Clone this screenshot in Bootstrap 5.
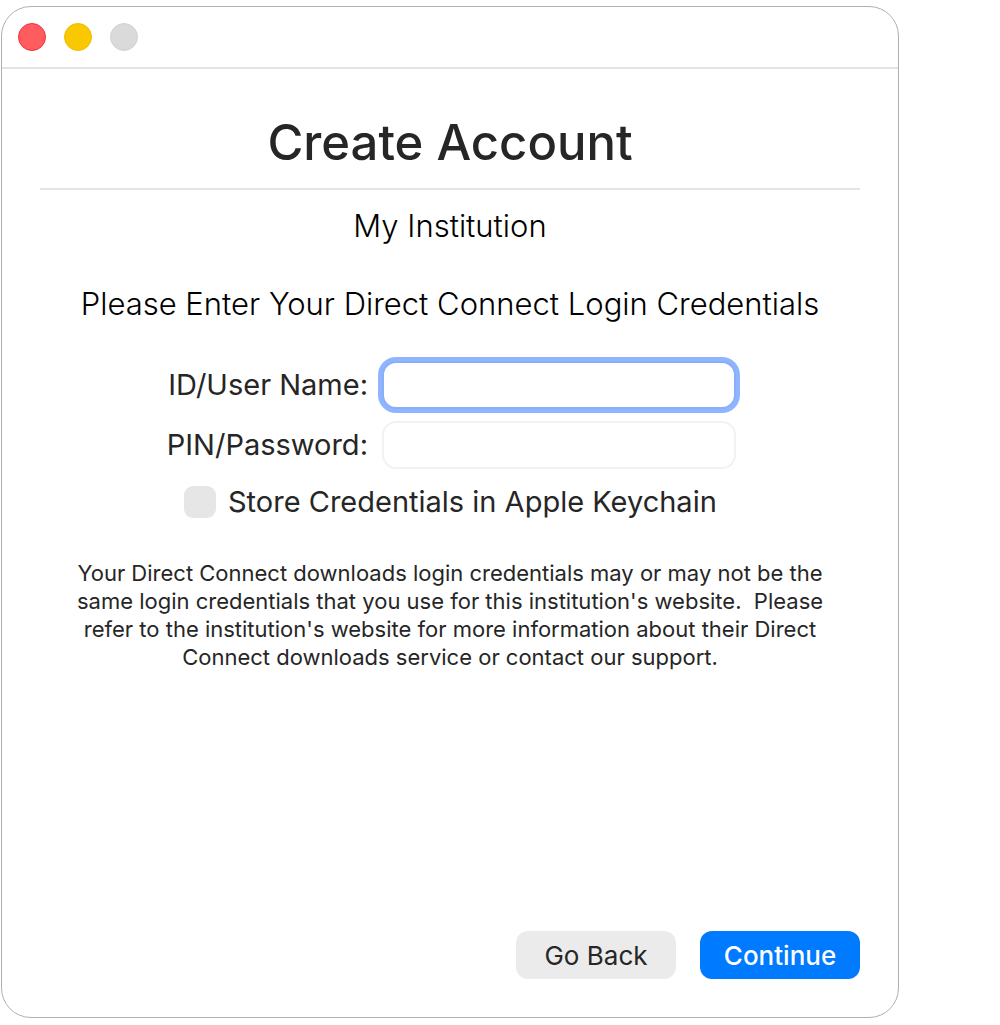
<!DOCTYPE html>
<html lang="en">
<head>
<meta charset="utf-8">
<meta name="viewport" content="width=device-width, initial-scale=1">
<title>Create Account</title>
<link href="https://cdn.jsdelivr.net/npm/bootstrap@5.3.0/dist/css/bootstrap.min.css" rel="stylesheet">
<style>
body { font-family: Inter, "Liberation Sans", sans-serif; background: #fff; color: #262626; }
.stage { width: 90%; min-height: 100vh; padding: 6px 1px 7px; }
.app-window { border: 1px solid #b0b0b0; border-radius: 30px; }
.title-bar { height: 62px; border-bottom: 2px solid #e4e4e4; padding: 0 16px; gap: 18px; }
.light { width: 28px; height: 28px; border-radius: 50%; border: 1px solid #d2d2d2; background: #dadada; padding: 0; }
.light-close { background: #ff5c60; border-color: #f5303a; }
.light-min { background: #fac800; border-color: #f0bc00; }
.window-body { padding: 40px 38px 38px; }
.heading { font-size: 49px; line-height: 68px; font-weight: 500; padding-bottom: 11px; border-bottom: 2px solid #e4e4e4; margin-bottom: 16px; }
.sub-text { font-size: 31px; line-height: 40px; font-weight: 300; color: #000; }
.prompt { margin: 38px 0 37px; }
.credentials { width: 572px; max-width: 100%; gap: 12px; font-size: 29px; line-height: 46px; }
.field-row { gap: 14px; }
.field-label { width: 204px; }
.field { height: 48px; border: 2px solid #f2f2f2; border-radius: 14px; font-size: 28px; padding: 0 12px; }
.field-active, .field:focus { border-color: #8aaffa; box-shadow: 0 0 0 4px #90b5ff; }
.keychain { gap: 12px; padding-left: 20px; line-height: 42px; }
.keychain .form-check-input { width: 32px; height: 32px; border: 0; border-radius: 9px; background-color: #e6e6e6; }
.keychain .form-check-input:checked { background-color: #007aff; }
.note { font-size: 22px; line-height: 28px; margin: 36px auto 0; max-width: 772px; }
.action { width: 160px; height: 48px; border: 0; border-radius: 12px; font-size: 26px; line-height: 46px; padding: 2px 0 0; color: #262626; background: #ebebeb; }
.action-main { background: #007aff; color: #fff; font-weight: 500; }
</style>
</head>
<body>
<div class="stage d-flex flex-column">
  <main class="app-window d-flex flex-column flex-grow-1">
    <div class="title-bar d-flex align-items-center">
      <button type="button" class="light light-close" aria-label="Close"></button>
      <button type="button" class="light light-min" aria-label="Minimize"></button>
      <button type="button" class="light" aria-label="Zoom" disabled></button>
    </div>
    <form class="window-body d-flex flex-column flex-grow-1">
      <h1 class="heading text-center">Create Account</h1>
      <p class="sub-text text-center mb-0">My Institution</p>
      <p class="sub-text prompt text-center">Please Enter Your Direct Connect Login Credentials</p>
      <div class="credentials d-flex flex-column mx-auto">
        <div class="field-row d-flex align-items-center">
          <label class="field-label flex-shrink-0 text-end text-nowrap" for="user">ID/User Name:</label>
          <input class="form-control field field-active" id="user" type="text">
        </div>
        <div class="field-row d-flex align-items-center">
          <label class="field-label flex-shrink-0 text-end text-nowrap" for="pin">PIN/Password:</label>
          <input class="form-control field" id="pin" type="password">
        </div>
        <div class="keychain d-flex align-items-center">
          <input class="form-check-input m-0 flex-shrink-0" id="store" type="checkbox">
          <label class="text-nowrap" for="store">Store Credentials in Apple Keychain</label>
        </div>
      </div>
      <p class="note text-center">Your Direct Connect downloads login credentials may or may not be the same login credentials that you use for this institution's website.&nbsp; Please refer to the institution's website for more information about their Direct Connect downloads service or contact our support.</p>
      <div class="d-flex justify-content-end gap-4 mt-auto">
        <button type="button" class="btn action">Go Back</button>
        <button type="submit" class="btn action action-main">Continue</button>
      </div>
    </form>
  </main>
</div>
<script src="https://cdn.jsdelivr.net/npm/bootstrap@5.3.0/dist/js/bootstrap.bundle.min.js"></script>
</body>
</html>
